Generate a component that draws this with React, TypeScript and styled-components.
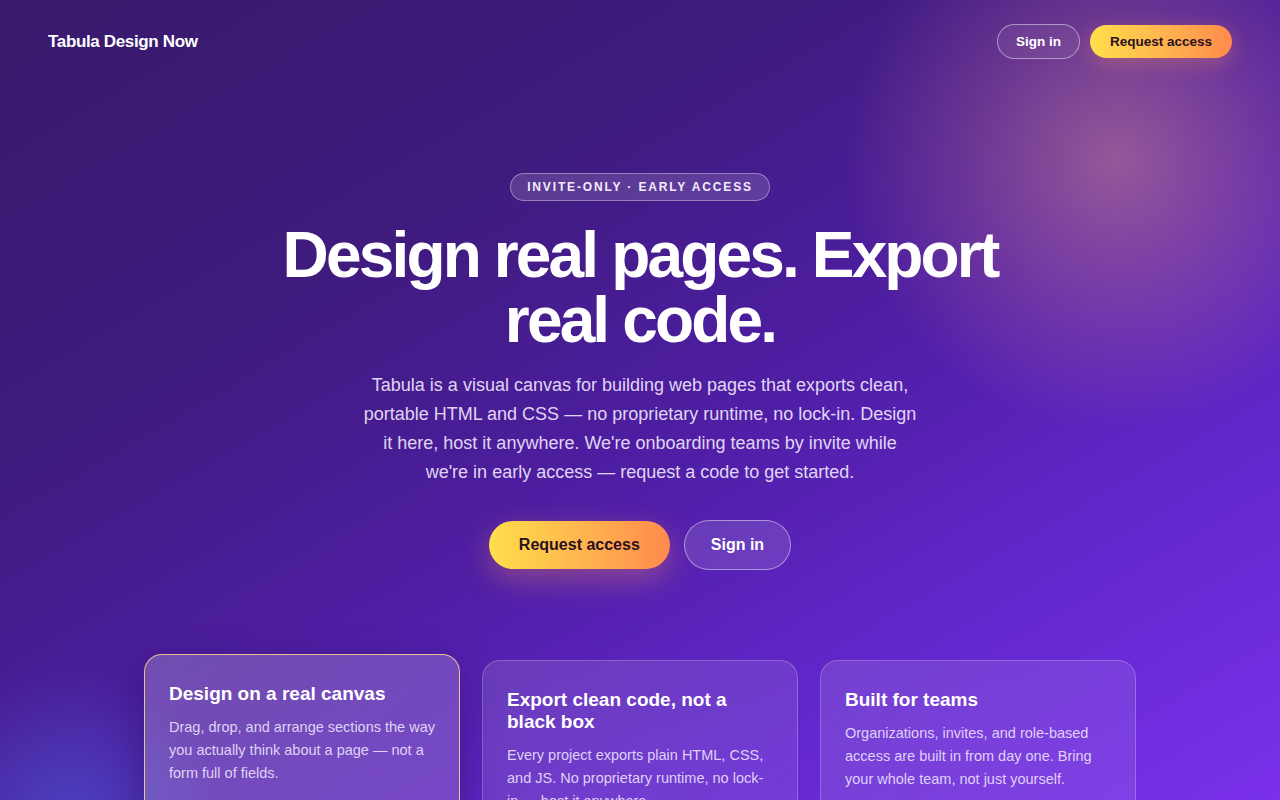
import React from 'react';
import styled, { createGlobalStyle, css } from 'styled-components';

const GlobalStyle = createGlobalStyle`
  * { box-sizing: border-box; }
  html, body { margin: 0; padding: 0; }
  body {
    font-family: "Liberation Sans", Arial, sans-serif;
    color: #fff;
    background: #371a6b;
  }
`;

const Page = styled.div`
  position: relative;
  min-height: 100vh;
  height: 800px;
  overflow: hidden;
  background:
    radial-gradient(circle at 1115px 160px, rgba(255, 176, 140, 0.4) 0px, rgba(255, 160, 140, 0.18) 150px, rgba(255, 150, 140, 0) 270px),
    radial-gradient(circle at 70px 820px, rgba(70, 110, 220, 0.45) 0px, rgba(70, 110, 220, 0) 150px),
    linear-gradient(150deg, #381a6c 0%, #3f1b7e 30%, #4f1ea5 55%, #6428cf 78%, #7a30ea 100%);
`;

const Nav = styled.header`
  display: flex;
  align-items: center;
  justify-content: space-between;
  padding: 24px 48px;
`;

const Logo = styled.div`
  font-size: 17px;
  font-weight: 700;
  letter-spacing: -0.35px;
  color: #fff;
`;

const NavActions = styled.div`
  display: flex;
  align-items: center;
  gap: 10px;
`;

const pill = css`
  display: inline-flex;
  align-items: center;
  justify-content: center;
  border-radius: 999px;
  font-family: "Liberation Sans", Arial, sans-serif;
  font-weight: 700;
  cursor: pointer;
`;

const GhostButton = styled.button<{ size: 'sm' | 'lg' }>`
  ${pill};
  color: #fff;
  background: ${(p) => (p.size === 'lg' ? 'rgba(255,255,255,0.12)' : 'rgba(255,255,255,0.06)')};
  border: 1px solid rgba(255, 255, 255, 0.45);
  height: ${(p) => (p.size === 'lg' ? '50px' : '35px')};
  padding: ${(p) => (p.size === 'lg' ? '0 26px' : '0 18px')};
  font-size: ${(p) => (p.size === 'lg' ? '16px' : '13.5px')};
`;

const PrimaryButton = styled.button<{ size: 'sm' | 'lg' }>`
  ${pill};
  color: #2b1020;
  border: none;
  background: linear-gradient(90deg, #ffdf4a 0%, #ffb24f 55%, #ff8a4c 100%);
  height: ${(p) => (p.size === 'lg' ? '48px' : '33px')};
  padding: ${(p) => (p.size === 'lg' ? '0 30px' : '0 20px')};
  font-size: ${(p) => (p.size === 'lg' ? '16px' : '13.5px')};
  box-shadow: ${(p) =>
    p.size === 'lg'
      ? '0 10px 30px rgba(255, 150, 90, 0.35)'
      : '0 6px 20px rgba(255, 150, 90, 0.3)'};
`;

const Hero = styled.section`
  display: flex;
  flex-direction: column;
  align-items: center;
  text-align: center;
  padding-top: 90px;
`;

const Badge = styled.div`
  height: 28px;
  display: inline-flex;
  align-items: center;
  padding: 0 16px;
  border-radius: 999px;
  border: 1px solid rgba(255, 255, 255, 0.35);
  background: rgba(255, 255, 255, 0.14);
  font-size: 12px;
  font-weight: 700;
  letter-spacing: 1.85px;
  color: #f3ecff;
`;

const Headline = styled.h1`
  margin: 22px 0 0;
  max-width: 780px;
  font-size: 64px;
  line-height: 65px;
  font-weight: 700;
  letter-spacing: -2.85px;
  color: #fff;
`;

const Lead = styled.p`
  margin: 18px 0 0;
  max-width: 560px;
  font-size: 18px;
  line-height: 29px;
  color: rgba(244, 236, 255, 0.9);
`;

const CtaRow = styled.div`
  display: flex;
  align-items: center;
  gap: 14px;
  margin-top: 33px;
`;

const Features = styled.section`
  display: grid;
  grid-template-columns: repeat(3, 316px);
  gap: 22px;
  justify-content: center;
  margin-top: 90px;
`;

const Card = styled.article<{ active?: boolean }>`
  height: 220px;
  padding: 28px 24px 24px 24px;
  border-radius: 18px;
  border: 1px solid ${(p) => (p.active ? 'rgba(255, 214, 140, 0.85)' : 'rgba(255, 255, 255, 0.22)')};
  background: ${(p) =>
    p.active
      ? 'linear-gradient(135deg, rgba(255,255,255,0.22), rgba(255,255,255,0.16))'
      : 'linear-gradient(135deg, rgba(255,255,255,0.12), rgba(255,255,255,0.08))'};
  transform: ${(p) => (p.active ? 'translateY(-6px)' : 'none')};
  box-shadow: ${(p) => (p.active ? '0 14px 40px rgba(20, 5, 60, 0.35)' : 'none')};
  text-align: left;
`;

const CardTitle = styled.h3`
  margin: 0;
  font-size: 19px;
  line-height: 22px;
  font-weight: 700;
  color: #fff;
`;

const CardText = styled.p`
  margin: 11px 0 0;
  font-size: 14.5px;
  line-height: 1.6;
  color: rgba(240, 230, 255, 0.88);
`;

const features = [
  {
    title: 'Design on a real canvas',
    text: 'Drag, drop, and arrange sections the way you actually think about a page — not a form full of fields.',
    active: true,
  },
  {
    title: 'Export clean code, not a black box',
    text: 'Every project exports plain HTML, CSS, and JS. No proprietary runtime, no lock-in — host it anywhere.',
  },
  {
    title: 'Built for teams',
    text: 'Organizations, invites, and role-based access are built in from day one. Bring your whole team, not just yourself.',
  },
];

export default function App() {
  return (
    <Page>
      <GlobalStyle />
      <Nav>
        <Logo>Tabula Design Now</Logo>
        <NavActions>
          <GhostButton size="sm">Sign in</GhostButton>
          <PrimaryButton size="sm">Request access</PrimaryButton>
        </NavActions>
      </Nav>
      <Hero>
        <Badge>INVITE-ONLY · EARLY ACCESS</Badge>
        <Headline>Design real pages. Export real code.</Headline>
        <Lead>
          Tabula is a visual canvas for building web pages that exports clean, portable HTML and CSS — no
          proprietary runtime, no lock-in. Design it here, host it anywhere. We're onboarding teams by invite
          while we're in early access — request a code to get started.
        </Lead>
        <CtaRow>
          <PrimaryButton size="lg">Request access</PrimaryButton>
          <GhostButton size="lg">Sign in</GhostButton>
        </CtaRow>
      </Hero>
      <Features>
        {features.map((f) => (
          <Card key={f.title} active={f.active}>
            <CardTitle>{f.title}</CardTitle>
            <CardText>{f.text}</CardText>
          </Card>
        ))}
      </Features>
    </Page>
  );
}
